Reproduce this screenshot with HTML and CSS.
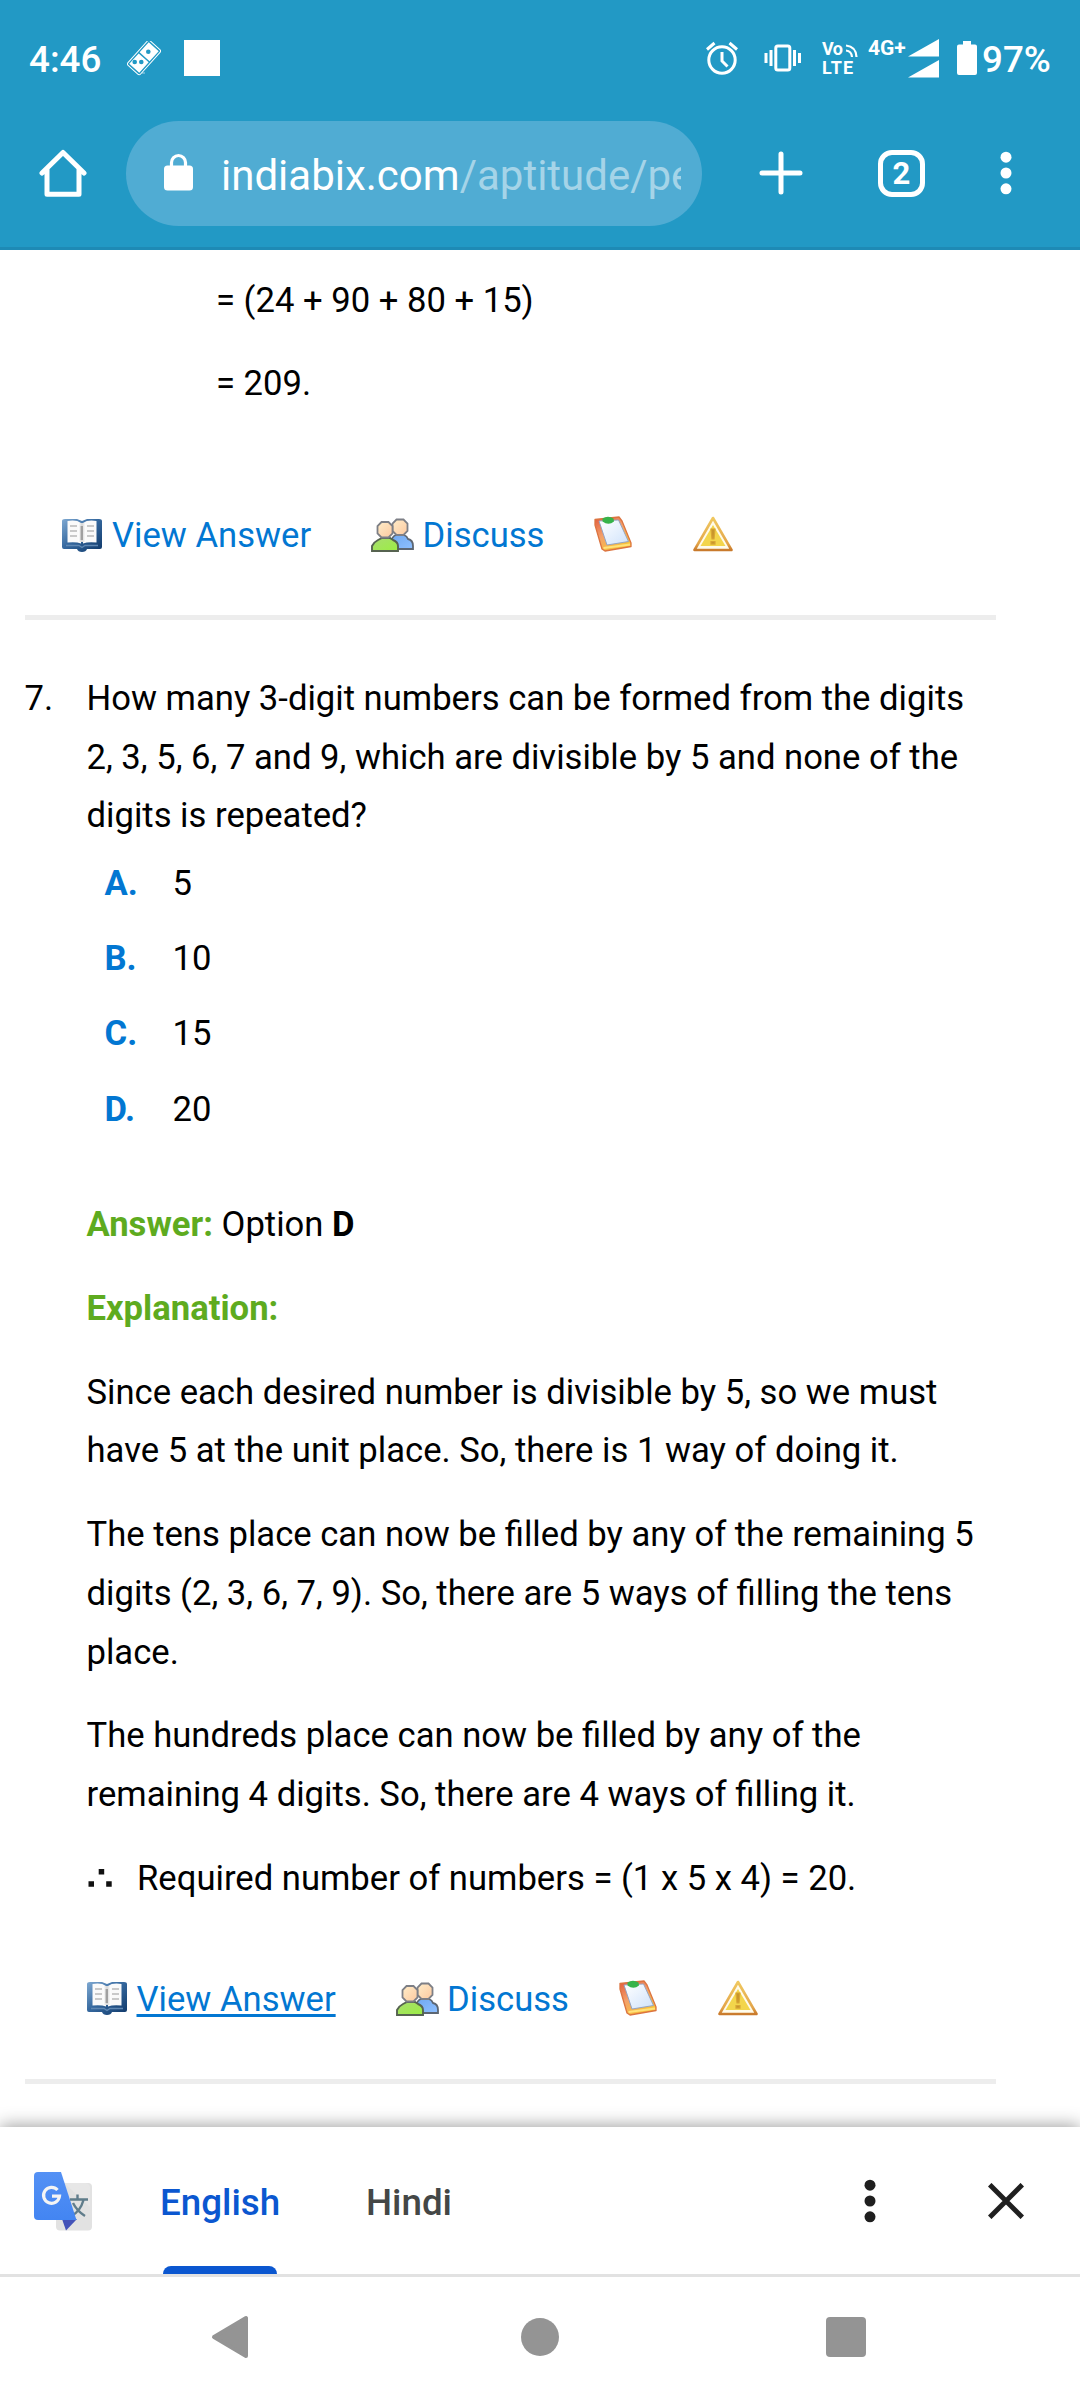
FILE: index.html
```html
<!DOCTYPE html>
<html lang="en">
<head>
<meta charset="utf-8">
<title>Permutation and Combination - Aptitude</title>
<link rel="stylesheet" href="styles.css">
</head>
<body>
<svg class="defs" width="0" height="0" aria-hidden="true">
  <defs>
    <linearGradient id="cover" x1="0" y1="0" x2="1" y2="1"><stop offset="0" stop-color="#7fa9d2"/><stop offset=".45" stop-color="#36699f"/><stop offset="1" stop-color="#0e3768"/></linearGradient>
    <linearGradient id="page" x1="0" x2="1"><stop offset="0" stop-color="#fff"/><stop offset=".5" stop-color="#d4d4d4"/><stop offset="1" stop-color="#fff"/></linearGradient>
    <linearGradient id="face" x1="0" y1="0" x2="1" y2="1"><stop offset="0" stop-color="#ffedc9"/><stop offset="1" stop-color="#fcc9a0"/></linearGradient>
    <linearGradient id="shirtA" x1="0" y1="0" x2="1" y2="1"><stop offset="0" stop-color="#a9dd70"/><stop offset="1" stop-color="#9bee42"/></linearGradient>
    <linearGradient id="shirtB" x1="0" y1="0" x2="1" y2="1"><stop offset="0" stop-color="#6fa8f0"/><stop offset="1" stop-color="#8fc0ff"/></linearGradient>
    <linearGradient id="board" x1="0" y1="0" x2=".6" y2="1"><stop offset="0" stop-color="#e25a3c"/><stop offset=".5" stop-color="#f3a06a"/><stop offset="1" stop-color="#f9c437"/></linearGradient>
    <linearGradient id="sheet" x1="0" y1="0" x2="1" y2="1"><stop offset="0" stop-color="#fff"/><stop offset="1" stop-color="#cfe2fb"/></linearGradient>
    <linearGradient id="rim" x1="0" y1="0" x2="0" y2="1"><stop offset="0" stop-color="#f0c860"/><stop offset=".8" stop-color="#e3a54a"/><stop offset="1" stop-color="#c97a2c"/></linearGradient>
    <linearGradient id="blue" x1="0" y1="0" x2="0" y2="1"><stop offset="0" stop-color="#5491f5"/><stop offset="1" stop-color="#4385f2"/></linearGradient>

    <symbol id="i-book" viewBox="0 0 40 36">
      <path d="M0 4q0-2 3-2h12l5 2 5-2h12q3 0 3 2v26q0 2-2 2H25q-1 3-5 3t-5-3H2q-2 0-2-2z" fill="url(#cover)"/>
      <path d="M5.500 4q9-1.500 13.500 2v20.500q-5-2-13.500-1zM34.500 4q-9-1.500-13.500 2v20.500q5-2 13.500-1z" fill="#fafafa"/>
      <path d="M16.500 6h7v19h-7z" fill="url(#page)"/><path d="M18.600 9h2.400v14h-2.400z" fill="#a0a0a0"/>
      <path d="M8 9h7M8 14h7M8 19h7M25 9h7M25 14h7M25 19h7" stroke="#c9c9c9" stroke-width="2"/>
      <path d="M4 28.500h13l3 2 3-2h13" stroke="#5f88b3" stroke-width="1.400" fill="none"/>
    </symbol>
    <symbol id="i-people" viewBox="0 0 43 34">
      <path d="M20 31v-6q1-7 5-8h8q3 1 4 4 5 1 5 7v3z" fill="url(#shirtB)" stroke="#5d6672" stroke-width="1.800"/>
      <path d="M25.500 1.500h7l4 4v7.500l-4 4h-7l-4-4V5.500z" fill="url(#face)" stroke="#7d7f86" stroke-width="1.800"/>
      <path d="M1 33v-5q2-4 6-6l4-2h8l3 2q5 2 5 6v5z" fill="url(#shirtA)" stroke="#566350" stroke-width="1.900"/>
      <path d="M10.500 4h7l4 4v7.500l-4 4h-7l-4-4V8z" fill="url(#face)" stroke="#7d7f86" stroke-width="1.800"/>
    </symbol>
    <symbol id="i-clip" viewBox="0 0 38 36">
      <path d="M1 3.500L25 1l3 4 9 22v3.500L11 35l-3-2L1 9z" fill="url(#board)" stroke="#dc7440" stroke-width="1.300" stroke-linejoin="round"/>
      <path d="M9.500 32L36 28.500" stroke="#ffe27a" stroke-width="2"/>
      <path d="M5 5l19.500-1 10 21.500L13 29z" fill="url(#sheet)" stroke="#8c9fc4" stroke-width=".9"/>
      <path d="M8.500 2.500q5.500-3.500 11 0l.5 3q-5.500 4.500-11.500 0z" fill="#37b34a"/>
    </symbol>
    <symbol id="i-warn" viewBox="0 0 40 36">
      <path d="M20 2L38.500 34H1.500z" fill="#fffbea" stroke="url(#rim)" stroke-width="2.600" stroke-linejoin="round"/>
      <path d="M20 9L32.500 30H7.500z" fill="#f3d54b"/>
      <path d="M18 13h4l-1 10h-2zM18 25.500h4v2.600h-4z" fill="#c8962c" stroke="#d9a634" stroke-width="1.200"/>
    </symbol>
  </defs>
</svg>

<header class="chrome">
  <div class="status">
    <span class="clock">4:46</span>
    <svg class="domino" width="34" height="35" viewBox="0 0 34 35">
      <g transform="rotate(42 17 16.500)"><rect x="8.500" y="0" width="17" height="33" rx="2" fill="none" stroke="#fff" stroke-width="1"/><path d="M10.300 2h13.400v13.600H10.300zM10.300 17h13.400v14H10.300z" fill="#fff"/></g>
      <g fill="#2299c5"><circle cx="21.300" cy="10.700" r="2.300"/><circle cx="7.700" cy="21" r="2.300"/><circle cx="14.300" cy="21" r="2.300"/></g>
      <path d="M15 32h3" stroke="#fff" stroke-width="1" opacity=".6"/>
    </svg>
    <span class="blank"></span>
    <svg class="alarm" width="34" height="36" viewBox="0 0 34 36" fill="none" stroke="#fff" stroke-width="3">
      <circle cx="17" cy="20" r="13.200"/><path d="M17 12v9l5.500 5.500M2 9.500l7.500-6.500M32 9.500L24.500 3"/>
    </svg>
    <svg class="vibrate" width="38" height="28" viewBox="0 0 38 28" fill="none" stroke="#fff" stroke-width="3">
      <rect x="11.800" y="2" width="14" height="24" rx="2"/><path d="M7 6v16M2 9v10M30.500 6v16M35.500 9v10"/>
    </svg>
    <svg class="volte" width="38" height="36" viewBox="0 0 38 36">
      <text x="0" y="15" class="tiny" textLength="21">Vo</text><text x="0" y="33.500" class="tiny" textLength="31">LTE</text>
      <path d="M24 5.500q10 1 10.500 11.500M24 10.500q5.500.5 6 6.500" fill="none" stroke="#fff" stroke-width="2.200"/>
    </svg>
    <span class="net">4G+</span>
    <svg class="signal" width="31" height="39" viewBox="0 0 31 39" fill="#fff"><path d="M0 17.500L31 0v17.500zM0 38.500L31 21v17.500z"/></svg>
    <svg class="battery" width="20" height="34" viewBox="0 0 20 34" fill="#fff"><path d="M6 0h8v3.500h4q2 0 2 2V32q0 2-2 2H2q-2 0-2-2V5.500q0-2 2-2h4z"/></svg>
    <span class="percent">97%</span>
  </div>
  <div class="toolbar">
    <svg class="home" width="48" height="48" viewBox="0 0 48 48" fill="none" stroke="#fff" stroke-width="5" stroke-linejoin="round" stroke-linecap="round"><path d="M3 24L24 3.500 45 24M8 20v25.300h32V20" /></svg>
    <div class="omnibox">
      <svg class="lock" width="29" height="38" viewBox="0 0 29 38"><path d="M7.500 15V9.500a7 7 0 0 1 14 0V15" fill="none" stroke="#fff" stroke-width="3.200"/><rect y="12.500" width="29" height="25" rx="3.500" fill="#fff"/></svg>
      <span class="url">indiabix.com<span class="path">/aptitude/pe</span></span>
    </div>
    <svg class="plus" width="44" height="44" viewBox="0 0 44 44" stroke="#fff" stroke-width="5" stroke-linecap="round"><path d="M22 3v38M3 22h38"/></svg>
    <span class="tabs">2</span>
    <svg class="more" width="12" height="44" viewBox="0 0 12 44" fill="#fff"><circle cx="6" cy="6.200" r="5.500"/><circle cx="6" cy="22" r="5.500"/><circle cx="6" cy="37.800" r="5.500"/></svg>
  </div>
</header>

<main class="content">
  <div class="prev">
    <p>= (24 + 90 + 80 + 15)</p>
    <p>= 209.</p>
  </div>
  <div class="links prev-links">
    <svg class="book" width="40" height="36"><use href="#i-book"/></svg><a class="view">View Answer</a>
    <svg class="people" width="43" height="34"><use href="#i-people"/></svg><a class="discuss">Discuss</a>
    <svg class="clip" width="38" height="36"><use href="#i-clip"/></svg>
    <svg class="warn" width="40" height="36"><use href="#i-warn"/></svg>
  </div>
  <div class="rule"></div>
  <section class="question">
    <div class="num">7.</div>
    <div class="body">
      <p class="ask">How many 3-digit numbers can be formed from the digits<br>2, 3, 5, 6, 7 and 9, which are divisible by 5 and none of the<br>digits is repeated?</p>
      <dl class="options">
        <dt>A.</dt><dd>5</dd>
        <dt>B.</dt><dd>10</dd>
        <dt>C.</dt><dd>15</dd>
        <dt>D.</dt><dd>20</dd>
      </dl>
      <p><b class="green">Answer:</b> Option <b>D</b></p>
      <p><b class="green">Explanation:</b></p>
      <p>Since each desired number is divisible by 5, so we must<br>have 5 at the unit place. So, there is 1 way of doing it.</p>
      <p>The tens place can now be filled by any of the remaining 5<br>digits (2, 3, 6, 7, 9). So, there are 5 ways of filling the tens<br>place.</p>
      <p>The hundreds place can now be filled by any of the<br>remaining 4 digits. So, there are 4 ways of filling it.</p>
      <p class="result"><svg class="therefore" width="26" height="20" viewBox="0 0 26 20" fill="#111"><path d="M11.700 0h5.500v5.500h-5.500zM1.500 12.300H7v5.500H1.500zM19.200 12.300h5.500v5.500h-5.500z"/></svg>Required number of numbers = (1 x 5 x 4) = 20.</p>
      <div class="links">
        <svg class="book" width="40" height="36"><use href="#i-book"/></svg><a class="view open">View Answer</a>
        <svg class="people" width="43" height="34"><use href="#i-people"/></svg><a class="discuss">Discuss</a>
        <svg class="clip" width="38" height="36"><use href="#i-clip"/></svg>
        <svg class="warn" width="40" height="36"><use href="#i-warn"/></svg>
      </div>
    </div>
  </section>
  <div class="rule last"></div>
</main>

<section class="translate">
  <svg class="glogo" width="58" height="60" viewBox="0 0 58 60">
    <rect x="22" y="12" width="36" height="47.500" rx="4" fill="#e2e2e2"/>
    <path d="M30 12l26 24v-20q-1-4-4-4z" fill="#ebebeb" opacity=".5"/>
    <path d="M36 28.500h18M43.500 23.500v5M49.500 29q-3 11-12 16M39 32q4 8 12 13" fill="none" stroke="#607d8b" stroke-width="2.400"/>
    <path d="M28 48h15L32 59.500z" fill="#4453b8"/>
    <path d="M4 1h23l15.500 48H4q-4 0-4-4V5q0-4 4-4z" fill="url(#blue)"/>
    <path d="M23.500 19a8 8 0 1 0 2 6.200H18" fill="none" stroke="#f4f4f4" stroke-width="3.200"/>
  </svg>
  <div class="lang active">English</div>
  <div class="lang hindi">Hindi</div>
  <svg class="tmore" width="12" height="44" viewBox="0 0 12 44" fill="#1f1f1f"><circle cx="6" cy="6.200" r="5.500"/><circle cx="6" cy="22" r="5.500"/><circle cx="6" cy="37.800" r="5.500"/></svg>
  <svg class="close" width="36" height="36" viewBox="0 0 36 36" stroke="#1f1f1f" stroke-width="5"><path d="M1.700 1.700l32.600 32.600M34.300 1.700L1.700 34.300"/></svg>
</section>

<nav class="sysnav">
  <svg class="back" width="38" height="44" viewBox="0 0 38 44"><path d="M3 22L35 3v38z" fill="#949494" stroke="#949494" stroke-width="4" stroke-linejoin="round"/></svg>
  <span class="circle"></span>
  <span class="square"></span>
</nav>
</body>
</html>
```

FILE: styles.css
```css
* { box-sizing: border-box; }
body {
  margin: 0;
  width: 1080px;
  height: 2400px;
  overflow: hidden;
  display: flex;
  flex-direction: column;
  background: #fff;
  color: #000;
  font-family: Roboto, sans-serif;
  font-size: 34.63px;
  line-height: 58.65px;
}
.defs { position: absolute; }
svg { flex: none; display: block; }
p { margin: 0 0 25.25px; white-space: nowrap; }

/* browser header */
.chrome {
  flex: none;
  height: 250px;
  background: #2299c5;
  border-bottom: 3px solid #1e8ab5;
  color: #fff;
}
.status {
  height: 116px;
  padding-left: 29px;
  display: flex;
  align-items: center;
  font-size: 36.75px;
  font-weight: 500;
  line-height: 44px;
}
.clock { width: 98px; padding-top: 3px; }
.domino { margin-top: 1px; }
.blank { width: 36px; height: 36px; margin-left: 23px; background: #fff; }
.alarm { margin-left: 485px; }
.vibrate { margin-left: 25px; }
.volte { margin-left: 20px; overflow: visible; }
.tiny { fill: #fff; font-size: 18px; font-weight: 700; }
.net { width: 40px; margin: -20px 0 0 8px; font-size: 21px; line-height: 24px; font-weight: 700; white-space: nowrap; }
.battery { margin-left: 18px; }
.percent { margin-left: 5px; padding-top: 3px; }
.toolbar {
  height: 114px;
  padding-left: 39px;
  display: flex;
  align-items: center;
}
.omnibox {
  flex: none;
  width: 576px;
  height: 105px;
  margin-left: 39px;
  padding: 0 21px 0 38px;
  display: flex;
  align-items: center;
  border-radius: 53px;
  background: #50acd3;
}
.lock { margin-top: -2px; }
.url {
  flex: 1;
  margin-left: 28px;
  padding-top: 5px;
  overflow: hidden;
  white-space: nowrap;
  font-size: 42px;
  line-height: 56px;
}
.path { color: #a5d4e8; }
.plus { margin-left: 57px; }
.tabs {
  width: 47px;
  height: 47px;
  margin-left: 75px;
  border: 5px solid #fff;
  border-radius: 14px;
  text-align: center;
  font-size: 31px;
  font-weight: 700;
  line-height: 37px;
}
.more { margin-left: 75px; }

/* page */
.content { flex: none; height: 1877px; padding: 21px 0 0 24.500px; overflow: hidden; }
.prev { padding-left: 191.500px; height: 235px; }
.prev p { margin-bottom: 24.350px; }
.links { display: flex; align-items: center; height: 58.65px; color: #0277d2; }
.prev-links { padding-left: 37.500px; }
.book { margin-top: -1px; }
.view { width: 201px; margin-left: 10px; white-space: nowrap; }
.view.open { text-decoration: underline; text-decoration-thickness: 3px; text-underline-offset: 3px; }
.people { margin-left: 58px; }
.discuss { width: 121px; margin-left: 8.500px; }
.clip { margin: -2px 0 0 50.500px; }
.warn { margin: -2px 0 0 61px; }
.rule { width: 971px; height: 5px; margin-top: 50.350px; background: #ededed; }
.question { display: flex; padding-top: 49px; }
.num { width: 62px; }
.ask { margin-bottom: 8.700px; }
.options {
  margin: 0 0 56.500px;
  padding-left: 18px;
  display: grid;
  grid-template-columns: 68px auto;
  line-height: 58.650px;
  row-gap: 16.700px;
}
.options dt { color: #0277d2; font-weight: 700; }
.options dd { margin: 0; }
.green { color: #5eab1f; }
.result { display: flex; margin-bottom: 62px; }
.therefore { margin: 20px 24.500px 0 0; }
.last { margin-top: 50.500px; }

/* translate bar */
.translate {
  flex: none;
  height: 150px;
  padding-left: 34px;
  display: flex;
  align-items: center;
  background: #fff;
  border-bottom: 3px solid #e2e2e2;
  box-shadow: 0 -2px 16px rgba(0, 0, 0, .36);
  font-size: 36.75px;
  font-weight: 500;
  position: relative;
}
.lang { height: 147px; line-height: 151px; color: #444746; }
.lang.active {
  width: 114px;
  margin-left: 71px;
  color: #0b57d0;
  display: flex;
  flex-direction: column;
  justify-content: space-between;
  text-indent: -3px;
}
.lang.active::after { content: ""; height: 8px; margin-top: -12px; border-radius: 8px 8px 0 0; background: #0b57d0; flex: none; }
.hindi { width: 84px; margin-left: 89px; }
.tmore { margin-left: 413.500px; }
.close { margin-left: 112px; }

/* system navigation */
.sysnav {
  flex: none;
  height: 123px;
  padding: 0 0 3px 211px;
  display: flex;
  align-items: center;
  background: #fff;
  position: relative;
}
.circle { width: 38px; height: 38px; margin-left: 272px; border-radius: 50%; background: #949494; }
.square { width: 40px; height: 40px; margin-left: 267px; border-radius: 4px; background: #949494; }
```
